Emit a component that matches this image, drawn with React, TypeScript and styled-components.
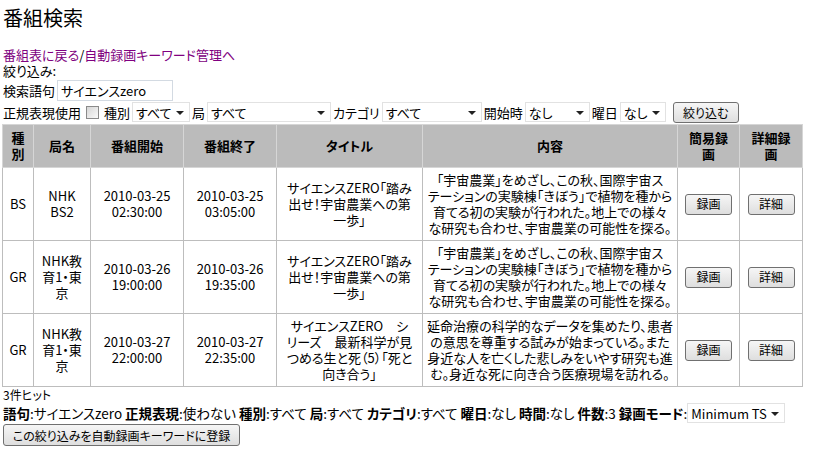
import styled, { createGlobalStyle } from "styled-components";

const GlobalStyle = createGlobalStyle`
  body {
    margin: 0;
    background: #fff;
    color: #000;
    font-family: "Noto Sans CJK JP", "Noto Sans", sans-serif;
    font-size: 13px;
    font-feature-settings: "palt";
  }
`;

const Page = styled.div`
  padding: 0 2px;
`;

const Title = styled.h2`
  font-size: 20px;
  font-weight: normal;
  line-height: 26px;
  margin: 5px 0 16px 1px;
`;

const Line = styled.div`
  line-height: 16px;
  height: 16px;
  padding-left: 1px;
`;

const Link = styled.a`
  color: #800080;
  text-decoration: none;
`;

const Row = styled.div`
  display: flex;
  align-items: center;
  height: 22px;
  gap: 2px;
  padding-left: 1px;
`;

const Field = styled.span`
  display: inline-flex;
  align-items: center;
  gap: 2px;
`;

const TextInput = styled.input`
  width: 116px;
  height: 21px;
  box-sizing: border-box;
  border: 1px solid #d3dae2;
  padding: 0 3px;
  font: inherit;
  font-size: 13px;
  font-feature-settings: "palt";
`;

const Check = styled.span`
  display: inline-block;
  width: 11px;
  height: 11px;
  border: 1px solid #8a8a8a;
  background: linear-gradient(135deg, #d6d6d6, #fafafa);
  margin: 0 3px 0 3px;
`;

const SelectWrap = styled.span<{ $w: number }>`
  position: relative;
  display: inline-block;
  width: ${(p) => p.$w}px;
  height: 20px;
  &::after {
    content: "";
    position: absolute;
    right: 6px;
    top: 9px;
    border-left: 4px solid transparent;
    border-right: 4px solid transparent;
    border-top: 4px solid #222;
    pointer-events: none;
  }
`;

const Select = styled.select`
  appearance: none;
  width: 100%;
  height: 100%;
  box-sizing: border-box;
  border: 1px solid #e2e2e2;
  background: #fff;
  padding: 0 16px 0 3px;
  font: inherit;
  font-size: 13px;
  font-feature-settings: "palt";
  color: #000;
`;

const Button = styled.button<{ $w: number; $h?: number }>`
  width: ${(p) => p.$w}px;
  height: ${(p) => p.$h ?? 21}px;
  box-sizing: border-box;
  border: 1px solid #707070;
  border-radius: 3px;
  background: linear-gradient(#f6f6f6, #dedede);
  font: inherit;
  font-size: 12px;
  font-feature-settings: "palt";
  white-space: nowrap;
  padding: 0;
  color: #000;
`;

const FilterButton = styled(Button)`
  margin-left: 5px;
`;

const Table = styled.table`
  border-collapse: collapse;
  table-layout: fixed;
  width: 801px;
  margin-top: 1px;
`;

const Th = styled.th`
  background: #bbb;
  border: 1px solid #d6d6d6;
  font-size: 13px;
  font-weight: bold;
  line-height: 16px;
  padding: 5px 4px;
  text-align: center;
`;

const Td = styled.td`
  border: 1px solid #bdbdbd;
  font-size: 13px;
  line-height: 16px;
  padding: 4px;
  text-align: center;
  vertical-align: middle;
  white-space: nowrap;
  overflow: visible;
`;

const Hits = styled.div`
  line-height: 16px;
  height: 16px;
  font-size: 12px;
  padding-left: 1px;
`;

const Summary = styled.div`
  display: flex;
  align-items: center;
  height: 20px;
  font-size: 13.5px;
  padding-left: 1px;
  white-space: pre;
`;

const B = styled.b`
  font-weight: bold;
`;

const Bottom = styled.div`
  margin-top: 1px;
  padding-left: 1px;
`;

type Program = {
  kind: string;
  station: string[];
  start: string[];
  end: string[];
  title: string[];
  desc: string[];
};

const space = [
  "「宇宙農業」をめざし、この秋、国際宇宙ス",
  "テーションの実験棟「きぼう」で植物を種から",
  "育てる初の実験が行われた。地上での様々",
  "な研究も合わせ、宇宙農業の可能性を探る。",
];

const spaceTitle = ["サイエンスZERO「踏み", "出せ！宇宙農業への第", "一歩」"];

const programs: Program[] = [
  {
    kind: "BS",
    station: ["NHK", "BS2"],
    start: ["2010-03-25", "02:30:00"],
    end: ["2010-03-25", "03:05:00"],
    title: spaceTitle,
    desc: space,
  },
  {
    kind: "GR",
    station: ["NHK教", "育1・東", "京"],
    start: ["2010-03-26", "19:00:00"],
    end: ["2010-03-26", "19:35:00"],
    title: spaceTitle,
    desc: space,
  },
  {
    kind: "GR",
    station: ["NHK教", "育1・東", "京"],
    start: ["2010-03-27", "22:00:00"],
    end: ["2010-03-27", "22:35:00"],
    title: ["サイエンスZERO　シ", "リーズ　最新科学が見", "つめる生と死（5）「死と", "向き合う」"],
    desc: [
      "延命治療の科学的なデータを集めたり、患者",
      "の意思を尊重する試みが始まっている。また",
      "身近な人を亡くした悲しみをいやす研究も進",
      "む。身近な死に向き合う医療現場を訪れる。",
    ],
  },
];

const cols = [31, 57, 93, 93, 146, 255, 62, 63];

function Lines({ lines }: { lines: string[] }) {
  return (
    <>
      {lines.map((l, i) => (
        <span key={i}>
          {i > 0 && <br />}
          {l}
        </span>
      ))}
    </>
  );
}

function Drop({ w, value }: { w: number; value: string }) {
  return (
    <SelectWrap $w={w}>
      <Select defaultValue={value}>
        <option>{value}</option>
      </Select>
    </SelectWrap>
  );
}

export default function App() {
  return (
    <Page>
      <GlobalStyle />
      <Title>番組検索</Title>
      <Line>
        <Link href="#">番組表に戻る</Link>/<Link href="#">自動録画キーワード管理へ</Link>
      </Line>
      <Line>絞り込み:</Line>
      <Row>
        <Field>
          検索語句
          <TextInput defaultValue="サイエンスzero" />
        </Field>
      </Row>
      <Row>
        <Field>
          正規表現使用
          <Check />
        </Field>
        <Field>
          種別
          <Drop w={58} value="すべて" />
        </Field>
        <Field>
          局
          <Drop w={124} value="すべて" />
        </Field>
        <Field>
          カテゴリ
          <Drop w={100} value="すべて" />
        </Field>
        <Field>
          開始時
          <Drop w={65} value="なし" />
        </Field>
        <Field>
          曜日
          <Drop w={46} value="なし" />
        </Field>
        <FilterButton $w={66}>絞り込む</FilterButton>
      </Row>
      <Table>
        <colgroup>
          {cols.map((w, i) => (
            <col key={i} style={{ width: w }} />
          ))}
        </colgroup>
        <thead>
          <tr>
            <Th>種<br />別</Th>
            <Th>局名</Th>
            <Th>番組開始</Th>
            <Th>番組終了</Th>
            <Th>タイトル</Th>
            <Th>内容</Th>
            <Th>簡易録<br />画</Th>
            <Th>詳細録<br />画</Th>
          </tr>
        </thead>
        <tbody>
          {programs.map((p, i) => (
            <tr key={i}>
              <Td>{p.kind}</Td>
              <Td><Lines lines={p.station} /></Td>
              <Td><Lines lines={p.start} /></Td>
              <Td><Lines lines={p.end} /></Td>
              <Td><Lines lines={p.title} /></Td>
              <Td><Lines lines={p.desc} /></Td>
              <Td><Button $w={47}>録画</Button></Td>
              <Td><Button $w={47}>詳細</Button></Td>
            </tr>
          ))}
        </tbody>
      </Table>
      <Hits>3件ヒット</Hits>
      <Summary>
        <B>語句</B>:サイエンスzero <B>正規表現</B>:使わない <B>種別</B>:すべて <B>局</B>:すべて{" "}
        <B>カテゴリ</B>:すべて <B>曜日</B>:なし <B>時間</B>:なし <B>件数</B>:3 <B>録画モード</B>:
        <Drop w={98} value="Minimum TS" />
      </Summary>
      <Bottom>
        <Button $w={237} $h={22}>
          この絞り込みを自動録画キーワードに登録
        </Button>
      </Bottom>
    </Page>
  );
}
